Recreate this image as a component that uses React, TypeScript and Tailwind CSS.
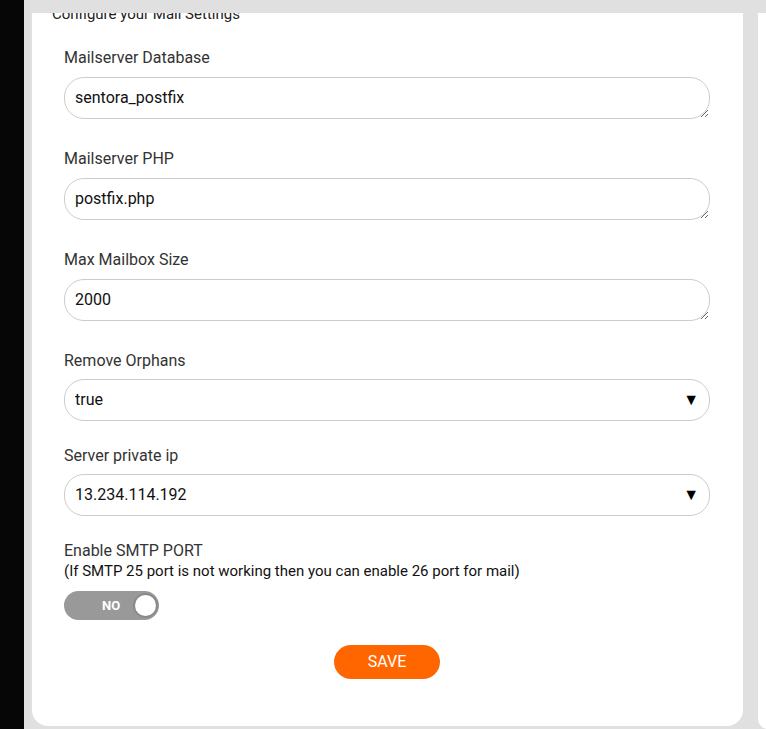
import React from "react";

function TextField({ label, value }: { label: string; value: string }) {
  return (
    <div className="flex flex-col">
      <label className="text-[16px] leading-[20px] text-[#333]">{label}</label>
      <textarea
        rows={1}
        defaultValue={value}
        className="mt-[9px] h-[42px] w-full overflow-hidden rounded-[20px] border border-[#ccc] bg-white px-[10px] py-[10px] text-[16px] leading-[20px] text-[#111] outline-none"
      />
    </div>
  );
}

function SelectField({ label, value, options }: { label: string; value: string; options: string[] }) {
  return (
    <div className="flex flex-col">
      <label className="text-[16px] leading-[20px] text-[#333]">{label}</label>
      <div className="relative mt-[8px]">
        <select
          defaultValue={value}
          className="h-[42px] w-full appearance-none rounded-[20px] border border-[#ccc] bg-white px-[10px] text-[16px] text-[#111] outline-none"
        >
          {options.map((o) => (
            <option key={o}>{o}</option>
          ))}
        </select>
        <span className="pointer-events-none absolute right-[11px] top-[11px] text-[16px] leading-[20px] text-black">▼</span>
      </div>
    </div>
  );
}

export default function App() {
  return (
    <div
      className="flex h-[729px] w-[766px] overflow-hidden bg-[#e0e0e0]"
      style={{ fontFamily: "Roboto, 'Liberation Sans', sans-serif" }}
    >
      <div className="w-[24px] shrink-0 bg-[#060606] pt-[66px] text-[14px] leading-[20px] text-white">
        <span className="-ml-[5px]">r</span>
      </div>

      <div className="ml-[8px] w-[711px] shrink-0 pt-[13px]">
        <div className="h-[713px] overflow-hidden rounded-b-[16px] bg-white">
          <h2 className="-mt-[9px] ml-[20px] text-[15px] leading-[20px] text-[#222]">
            Configure your Mail Settings
          </h2>

          <div className="mt-[24px] flex flex-col pl-[32px] pr-[33px]">
            <TextField label="Mailserver Database" value="sentora_postfix" />
            <div className="mt-[30px]">
              <TextField label="Mailserver PHP" value="postfix.php" />
            </div>
            <div className="mt-[30px]">
              <TextField label="Max Mailbox Size" value="2000" />
            </div>
            <div className="mt-[30px]">
              <SelectField label="Remove Orphans" value="true" options={["true", "false"]} />
            </div>
            <div className="mt-[25px]">
              <SelectField label="Server private ip" value="13.234.114.192" options={["13.234.114.192"]} />
            </div>

            <div className="mt-[25px] flex flex-col">
              <span className="text-[16px] leading-[20px] text-[#333]">Enable SMTP PORT</span>
              <span className="text-[15px] leading-[20px] text-[#111]">
                (If SMTP 25 port is not working then you can enable 26 port for mail)
              </span>
            </div>

            <div className="relative mt-[10px] h-[29px] w-[95px] rounded-full bg-[#999]">
              <span className="absolute left-[38px] top-0 text-[13px] font-bold leading-[29px] text-white">NO</span>
              <span className="absolute right-[1px] top-[2px] h-[25px] w-[25px] rounded-full border-[2px] border-[#8a8a8a] bg-white" />
            </div>

            <div className="mt-[25px] flex justify-center">
              <button className="h-[34px] w-[106px] rounded-full bg-[#ff6600] text-[16px] text-white">
                SAVE
              </button>
            </div>
          </div>
        </div>
      </div>

      <div className="ml-[15px] w-[20px] shrink-0 pt-[13px]">
        <div className="h-[716px] rounded-b-[16px] bg-white" />
      </div>
    </div>
  );
}
